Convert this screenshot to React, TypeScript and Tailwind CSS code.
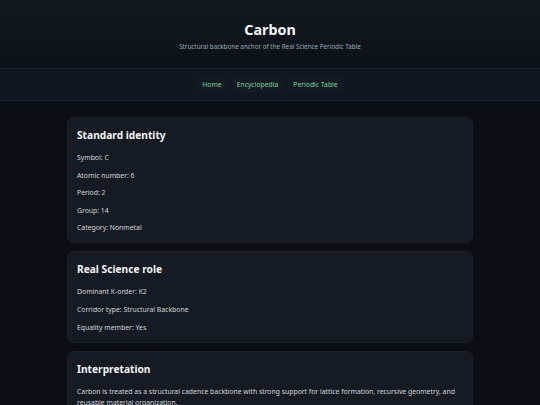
import React from 'react'

const identity = [
  'Symbol: C',
  'Atomic number: 6',
  'Period: 2',
  'Group: 14',
  'Category: Nonmetal',
]

const role = [
  'Dominant K-order: K2',
  'Corridor type: Structural Backbone',
  'Equality member: Yes',
]

function Card({ title, children }: { title: string; children: React.ReactNode }) {
  return (
    <section className="rounded-[7px] border border-[#1a2029] bg-[#161b23] px-[9px] pt-[10px] pb-[9px]">
      <h2 className="text-[10.2px] leading-[14px] font-bold text-[#f3f4f6]">{title}</h2>
      <div className="mt-[10px] flex flex-col gap-[6.6px]">{children}</div>
    </section>
  )
}

function Line({ children }: { children: React.ReactNode }) {
  return <p className="text-[6.85px] leading-[11px] text-[#d1d5db]">{children}</p>
}

export default function App() {
  return (
    <div
      className="min-h-[405px] bg-[#0b0f14] text-white"
      style={{ fontFamily: '"Noto Sans", "Open Sans", sans-serif' }}
    >
      {/* Header */}
      <header className="flex h-[68px] flex-col items-center justify-center bg-gradient-to-b from-[#121920] to-[#0d1218] pt-[3px]">
        <h1 className="text-[14.3px] leading-[20px] font-bold text-[#f8fafc]">Carbon</h1>
        <p className="mt-[2px] text-[6.3px] leading-[10px] text-[#9aa5b4]">
          Structural backbone anchor of the Real Science Periodic Table
        </p>
      </header>

      {/* Nav */}
      <nav className="flex h-[33px] items-center justify-center gap-[5px] border-y border-[#1d2530] bg-[#111720]">
        {['Home', 'Encyclopedia', 'Periodic Table'].map((label) => (
          <a
            key={label}
            href="#"
            className="rounded-[4px] bg-[#131a22] px-[5px] py-[3px] text-[6.8px] leading-[10px] text-[#7fd3a0]"
          >
            {label}
          </a>
        ))}
      </nav>

      {/* Main */}
      <main className="mx-auto flex w-[406px] flex-col gap-[8px] pt-[16px]">
        <Card title="Standard identity">
          {identity.map((t) => (
            <Line key={t}>{t}</Line>
          ))}
        </Card>
        <Card title="Real Science role">
          {role.map((t) => (
            <Line key={t}>{t}</Line>
          ))}
        </Card>
        <Card title="Interpretation">
          <p className="text-[6.85px] leading-[11px] text-[#d1d5db]">
            Carbon is treated as a structural cadence backbone with strong support for lattice formation, recursive
            geometry, and reusable material organization.
          </p>
        </Card>
      </main>
    </div>
  )
}
